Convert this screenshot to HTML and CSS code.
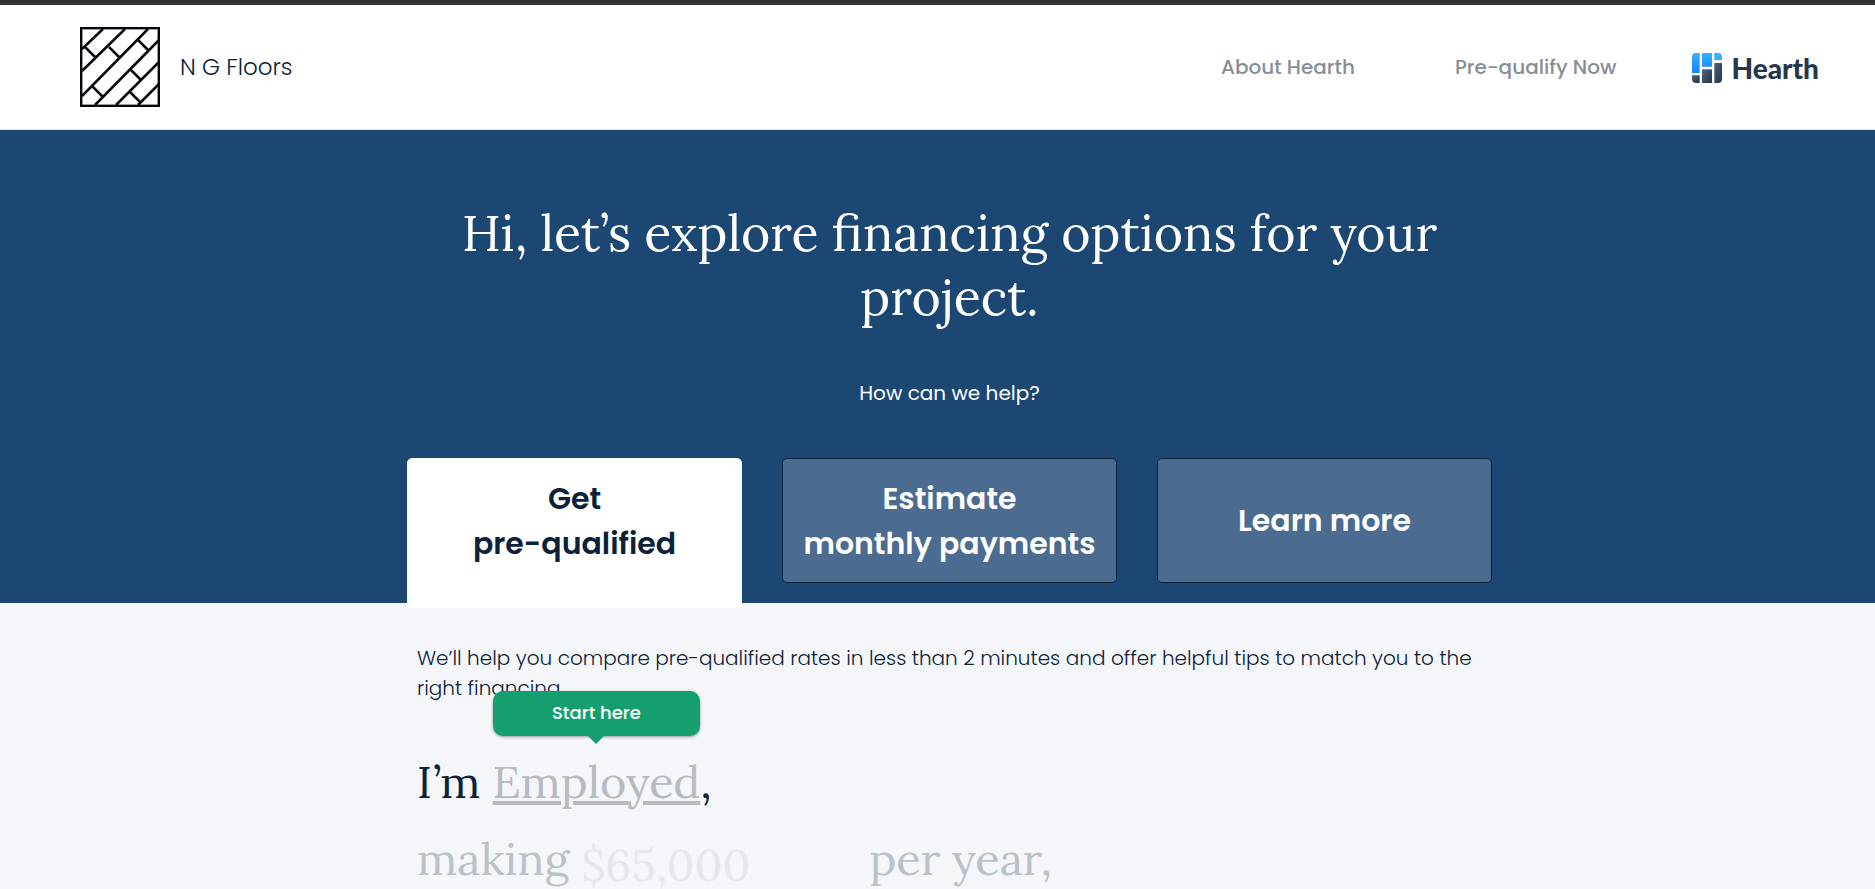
FILE: index.html
```html
<!DOCTYPE html>
<html lang="en">
<head>
<meta charset="utf-8">
<meta name="viewport" content="width=device-width, initial-scale=1">
<title>N G Floors</title>
<link rel="stylesheet" href="styles.css">
</head>
<body>
<header class="site-header">
  <div class="brand">
    <svg class="brand-mark" viewBox="0 0 80 80" aria-hidden="true">
      <rect x="1.2" y="1.2" width="77.6" height="77.6" fill="#fff" stroke="#05060f" stroke-width="2.4"/>
      <path d="M23 2 2 22M45 2 2 44M68 2 2 69M79 13 15 78M79 35 36 78M79 57 58 78M5 20l11 11M29 20l11 11M58 13l11 11M50 42l11 11M12 59l11 11M49 64l11 11" fill="none" stroke="#05060f" stroke-width="2.5"/>
    </svg>
    <span class="brand-name">N G Floors</span>
  </div>
  <nav class="site-nav">
    <a class="nav-link" href="#about">About Hearth</a>
    <a class="nav-link" href="#prequalify">Pre-qualify Now</a>
    <a class="hearth" href="#hearth">
      <svg class="hearth-mark" viewBox="0 0 30 30" aria-hidden="true">
        <defs>
          <linearGradient id="sky" x1="0" y1="0" x2="0" y2="1"><stop offset="0" stop-color="#30b2ff"/><stop offset="1" stop-color="#1a80ff"/></linearGradient>
          <linearGradient id="slate" x1="0" y1="0" x2="1" y2="1"><stop offset="0" stop-color="#4f617a"/><stop offset="1" stop-color="#24354b"/></linearGradient>
        </defs>
        <path d="M4 0h3.7v20H0V4a4 4 0 0 1 4-4zM10 0h10v13.7H10z" fill="url(#sky)"/>
        <path d="M22.3 0H26a4 4 0 0 1 4 4v3h-7.7z" fill="#30b2ff"/>
        <path d="M0 22.3h7.7V30H4a4 4 0 0 1-4-4z" fill="url(#slate)"/>
        <path d="M10 16.3h10V30H10z" fill="url(#slate)"/>
        <path d="M22.3 10H30v16a4 4 0 0 1-4 4h-3.7z" fill="url(#slate)"/>
      </svg>
      <span class="hearth-name">Hearth</span>
    </a>
  </nav>
</header>
<main>
  <section class="hero">
    <h1 class="hero-title">Hi, let’s explore financing options for your project.</h1>
    <p class="hero-sub">How can we help?</p>
    <div class="tabs">
      <button class="tab tab-active" type="button">Get<br>pre-qualified</button>
      <button class="tab" type="button">Estimate<br>monthly payments</button>
      <button class="tab" type="button">Learn more</button>
    </div>
  </section>
  <form class="prequal">
    <p class="intro">We’ll help you compare pre-qualified rates in less than 2 minutes and offer helpful tips to match you to the right financing.</p>
    <div class="line">
      <span>I’m</span>
      <span class="choice-wrap">
        <span class="tip" role="tooltip" id="tip">Start here</span>
        <button class="choice" type="button" aria-describedby="tip">Employed</button></span><span class="comma">,</span>
    </div>
    <div class="line line-muted">
      <label for="income">making</label>
      <input class="amount" id="income" type="text" placeholder="$65,000">
      <span>per year,</span>
    </div>
  </form>
</main>
</body>
</html>
```
FILE: styles.css
```css
* { box-sizing: border-box; }
body {
  margin: 0;
  min-height: 100vh;
  background: #f4f6fa;
  color: #0c2238;
  font-family: Poppins, Inter, "Open Sans", sans-serif;
  overflow-x: hidden;
}
button, input { font: inherit; color: inherit; border: 0; background: none; padding: 0; margin: 0; }
a { text-decoration: none; }

.site-header {
  display: flex;
  align-items: center;
  justify-content: space-between;
  height: 130px;
  padding: 0 56px 0 80px;
  background: #fff;
  border-top: 5px solid #333;
  border-bottom: 1px solid #e4e7ea;
}
.brand { display: flex; align-items: center; gap: 20px; }
.brand-mark { width: 80px; height: 80px; }
.brand-name { font-size: 23px; font-weight: 300; }
.site-nav { display: flex; align-items: center; }
.nav-link { margin-right: 100px; font-size: 20px; font-weight: 500; color: #868e96; }
.nav-link + .nav-link { margin-right: 76px; }
.hearth { display: flex; align-items: center; gap: 9px; padding-top: 2px; }
.hearth-mark { width: 30px; height: 30px; }
.hearth-name { font-family: Lato, sans-serif; font-size: 28px; line-height: 30px; font-weight: 900; color: #26374d; }

.hero {
  display: flex;
  flex-direction: column;
  align-items: center;
  height: 473px;
  padding: 71px 0 0 24px;
  background: #1b4772;
  color: #fff;
}
.hero-title {
  max-width: 1085px;
  margin: 0;
  font-family: Lora, "Liberation Serif", serif;
  font-size: 50px;
  line-height: 64px;
  font-weight: 400;
  text-align: center;
}
.hero-sub { margin: 48px 0 49px; font-size: 20px; line-height: 32px; }
.tabs { display: grid; grid-template-columns: repeat(3, 1fr); align-items: start; gap: 40px; width: 100%; max-width: 1085px; }
.tab {
  height: 125px;
  border: 1px solid #0c2238;
  border-radius: 5px;
  background: #4b6c90;
  font-size: 30px;
  line-height: 45px;
  font-weight: 600;
  white-space: nowrap;
}
.tab-active { height: 150px; padding-bottom: 25px; border-color: #fff; background: #fff; color: #0c2238; }

.prequal { max-width: 1089px; margin: 0 auto; padding: 40px 0 0 24px; }
.intro { margin: 0; font-size: 20px; line-height: 30px; font-weight: 300; }
.line {
  display: flex;
  align-items: baseline;
  font-family: Lora, "Liberation Serif", serif;
  font-size: 45px;
  line-height: 77px;
  white-space: nowrap;
}
.intro + .line { margin-top: 40px; }
.choice-wrap { position: relative; margin-left: 12px; }
.choice { color: #b5bbc1; text-decoration: underline; text-decoration-thickness: 4px; text-underline-offset: 3px; }
.tip {
  position: absolute;
  left: 0;
  right: 0;
  bottom: 84px;
  height: 45px;
  border-radius: 10px;
  background: #159f70;
  box-shadow: 0 1px 3px rgba(0, 0, 0, 0.4);
  color: #fff;
  font-family: Poppins, Inter, "Open Sans", sans-serif;
  font-size: 18px;
  line-height: 44px;
  font-weight: 500;
  text-align: center;
}
.tip::after {
  content: "";
  position: absolute;
  top: 100%;
  left: 50%;
  margin-left: -8px;
  border: 8px solid transparent;
  border-top-color: #159f70;
  border-bottom: 0;
}
.line-muted { align-items: flex-start; color: #b9c1c9; }
.amount { width: 288px; height: 89px; margin-left: 12px; }
.amount::placeholder { color: #e4e8eb; opacity: 1; }
```
